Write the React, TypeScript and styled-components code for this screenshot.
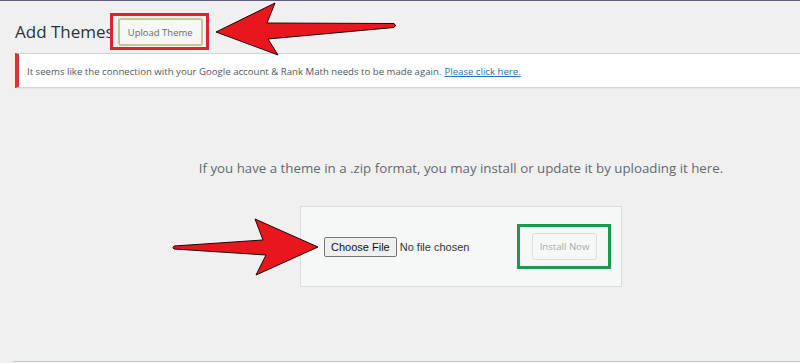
import React from 'react';
import styled, { createGlobalStyle } from 'styled-components';

const GlobalStyle = createGlobalStyle`
    html,
    body {
        margin: 0;
        padding: 0;
        background-color: #f0f0f1;
        overflow: hidden;
    }

    body {
        font-family: 'Open Sans', 'Noto Sans', sans-serif;
        color: #3c434a;
    }
`;

const Page = styled.div`
    position: relative;
    width: 800px;
    height: 363px;
    overflow: hidden;
`;

const AdminEdge = styled.div`
    height: 1px;
    background-color: #615d80;
`;

const Header = styled.div`
    display: flex;
    align-items: center;

    padding: 12px 0 3px 15px;
`;

const Title = styled.h1`
    margin: 0;

    color: #2c3338;
    font-weight: 400;
    font-size: 17px;
    line-height: 1;
`;

const Highlight = styled.div<{ color: string }>`
    display: flex;
    align-items: center;
    box-sizing: border-box;

    border: 3px solid ${({ color }) => color};
`;

const TitleHighlight = styled(Highlight)`
    height: 37px;
    margin-left: -4px;
    padding: 1px 3px 0 5px;
`;

const ActionButton = styled.span`
    display: inline-flex;
    align-items: center;
    box-sizing: border-box;
    height: 28px;

    padding: 0 8px;
    border: 2px solid #bccb8f;
    border-radius: 3px;

    background-color: #f6f7f7;

    color: #6d6e57;
    font-size: 9.5px;
`;

const Notice = styled.div`
    display: flex;
    align-items: center;
    box-sizing: border-box;
    height: 35px;

    margin-left: 15px;
    padding: 2px 0 0 8px;

    border: 1px solid #d2d3d6;
    border-left: 4px solid #d63638;
    border-right: none;

    background-color: #fff;
    box-shadow: 0 1px 1px rgba(0, 0, 0, 0.04);

    font-size: 9.65px;
    color: #50575e;
`;

const NoticeLink = styled.a`
    margin-left: 3px;

    color: #2271b1;
    text-decoration: underline;
`;

const UploadSection = styled.div`
    width: 892px;
    margin-left: 15px;

    text-align: center;
`;

const InstallHelp = styled.p`
    margin: 71px 0 0;

    color: #646970;
    font-size: 13.3px;
    line-height: 18px;
`;

const UploadForm = styled.div`
    display: inline-flex;
    justify-content: space-between;
    align-items: center;
    box-sizing: border-box;
    width: 322px;
    height: 81px;

    margin-top: 29px;
    padding: 0 23px;

    border: 1px solid #dcdcde;

    background-color: #f6f7f7;
`;

const FilePicker = styled.div`
    display: flex;
    align-items: center;

    font-family: 'Liberation Sans', Arial, sans-serif;
    font-size: 11px;
    color: #333;
`;

const FileButton = styled.span`
    display: inline-flex;
    align-items: center;
    box-sizing: border-box;
    height: 20px;

    margin-right: 3px;
    padding: 0 6px;

    border: 1px solid #767676;
    border-radius: 2px;

    background-color: #efefef;

    color: #111;
`;

const InstallHighlight = styled(Highlight)`
    width: 94px;
    height: 45px;
    margin-right: -13px;
    padding-left: 12px;
`;

const DisabledButton = styled.span`
    display: inline-flex;
    align-items: center;
    justify-content: center;
    box-sizing: border-box;
    width: 65px;
    height: 27px;

    border: 1px solid #dcdcde;
    border-radius: 3px;

    background-color: #f6f7f7;

    color: #a7aaad;
    font-size: 9.6px;
`;

const ListEdge = styled.div`
    height: 10px;
    margin: 74px 0 0 13px;

    border-top: 1px solid #c3c4c7;

    background-color: #f6f7f7;
`;

const Annotations = styled.svg`
    position: absolute;
    top: 0;
    left: 0;

    pointer-events: none;
`;

const ARROW_RED = '#e8171d';

export default function App() {
    return (
        <>
            <GlobalStyle />
            <Page>
                <AdminEdge />

                <Header>
                    <Title>Add Themes</Title>
                    <TitleHighlight color="#d9262c">
                        <ActionButton>Upload Theme</ActionButton>
                    </TitleHighlight>
                </Header>

                <Notice>
                    It seems like the connection with your Google account &amp; Rank Math needs to be made again.
                    <NoticeLink href="#">Please click here.</NoticeLink>
                </Notice>

                <UploadSection>
                    <InstallHelp>
                        If you have a theme in a .zip format, you may install or update it by uploading it here.
                    </InstallHelp>
                    <UploadForm>
                        <FilePicker>
                            <FileButton>Choose File</FileButton>
                            No file chosen
                        </FilePicker>
                        <InstallHighlight color="#1f9a4c">
                            <DisabledButton>Install Now</DisabledButton>
                        </InstallHighlight>
                    </UploadForm>
                </UploadSection>

                <ListEdge />

                <Annotations width="800" height="363" viewBox="0 0 800 363">
                    <path
                        d="M216 32 L275 3 L267 23 L394 23.5 Q397 25.5 394 27.5 L268 39 L278 55 Z"
                        fill={ARROW_RED}
                        stroke="#1a0a0a"
                        strokeWidth="1"
                        strokeLinejoin="round"
                    />
                    <path
                        d="M318 247 L255 219 L263 240 L174 246 Q172 247.5 174 249 L266 255 L256 275 Z"
                        fill={ARROW_RED}
                        stroke="#1a0a0a"
                        strokeWidth="1"
                        strokeLinejoin="round"
                    />
                </Annotations>
            </Page>
        </>
    );
}
